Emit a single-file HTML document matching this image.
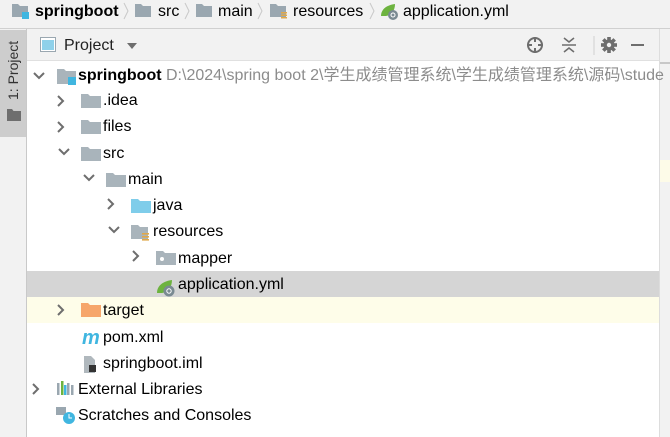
<!DOCTYPE html><html><head><meta charset="utf-8"><style>
*{margin:0;padding:0;box-sizing:border-box}
body{width:670px;height:437px;overflow:hidden;background:#fff;font-family:"Liberation Sans","Noto Sans CJK SC",sans-serif;font-size:16px;color:#000;position:relative}
.a{position:absolute;white-space:nowrap}
.row{position:absolute;left:27px;width:632px;height:26px}
.t{position:absolute;line-height:26px;top:0}
</style></head><body>
<div class="a" style="left:0;top:0;width:670px;height:29px;background:#f2f2f2;border-bottom:1px solid #d0d0d0"></div>
<svg class="a" style="left:0;top:0" width="440" height="29">
<g fill="#9aa7b0"><path d="M12 4h6l2 2h8v11H12z"/><path d="M135 4h6l2 2h8v11h-16z"/><path d="M196 4h6l2 2h8v11h-16z"/><path d="M270 4h6l2 2h8v11h-16z"/></g>
<rect x="22" y="12" width="7" height="7" fill="#40b6e0"/>
<g fill="#e0a84a"><rect x="281" y="12" width="6" height="1.5"/><rect x="281" y="14.5" width="6" height="1.5"/><rect x="281" y="17" width="6" height="1.5"/></g>
<g fill="none" stroke="#c8c8c8"><path d="M124 3l4 8-4 8"/><path d="M185 3l4 8-4 8"/><path d="M258 3l4 8-4 8"/><path d="M370 3l4 8-4 8"/></g>
<path d="M381 16c0-7 6-11 14-12 0 6-3 11-9 12z" fill="#6db33f"/><circle cx="393" cy="15" r="5" fill="#7a8a92"/><circle cx="393" cy="15" r="2" fill="none" stroke="#fff"/>
</svg>
<div class="a" style="left:35px;top:1px;font-weight:bold;line-height:22px">springboot</div>
<div class="a" style="left:158px;top:1px;line-height:22px">src</div>
<div class="a" style="left:218px;top:1px;line-height:22px">main</div>
<div class="a" style="left:293px;top:1px;line-height:22px">resources</div>
<div class="a" style="left:403px;top:1px;line-height:22px">application.yml</div>
<div class="a" style="left:0;top:29px;width:27px;height:408px;background:#f2f2f2;border-right:1px solid #c9c9c9"></div>
<div class="a" style="left:0;top:30px;width:26px;height:107px;background:#cdcdcd"></div>
<div class="a" style="left:5px;top:100px;transform:rotate(-90deg);transform-origin:0 0;font-size:14px;line-height:16px;color:#333;width:70px">1: Project</div>
<svg class="a" style="left:7px;top:109px" width="14" height="12"><path d="M0 0h5l1.5 2H14v10H0z" fill="#6e6e6e"/></svg>
<div class="a" style="left:27px;top:29px;width:632px;height:32px;background:#f2f2f2;border-bottom:1px solid #e0e0e0"></div>
<svg class="a" style="left:40px;top:37px" width="16" height="15"><rect x="0.5" y="0.5" width="15" height="14" fill="#fff" stroke="#9aa7b0"/><rect x="2" y="3" width="12" height="10" fill="#8fd1ea"/></svg>
<div class="a" style="left:64px;top:35px;line-height:22px;color:#222">Project</div>
<svg class="a" style="left:126px;top:42px" width="12" height="8"><path d="M1 1h10l-5 6z" fill="#6e6e6e"/></svg>
<svg class="a" style="left:520px;top:33px" width="130" height="24" fill="none" stroke="#6e6e6e" stroke-width="2">
<circle cx="15" cy="12" r="7"/><path d="M15 4v5M15 15v5M7 12h5M18 12h5"/>
<path d="M42 12h14M44 5l5 4 5-4M44 19l5-4 5 4" stroke-width="1.6"/>
<path d="M74 3v19" stroke="#d0d0d0" stroke-width="1"/>
<g fill="#6e6e6e" stroke="none"><circle cx="89" cy="12" r="5.5"/><g transform="translate(89 12)"><rect x="-1.8" y="-8" width="3.6" height="16"/><rect x="-1.8" y="-8" width="3.6" height="16" transform="rotate(45)"/><rect x="-1.8" y="-8" width="3.6" height="16" transform="rotate(90)"/><rect x="-1.8" y="-8" width="3.6" height="16" transform="rotate(135)"/></g></g><circle cx="89" cy="12" r="2.2" fill="#f2f2f2" stroke="none"/>
<path d="M111 12h13"/>
</svg>
<div class="a" style="left:659px;top:29px;width:11px;height:408px;background:#f2f2f2;border-left:1px solid #ddd"></div>
<div class="a" style="left:660px;top:62px;width:10px;height:2px;background:#c8c8c8"></div>
<div class="a" style="left:660px;top:160px;width:10px;height:22px;background:#fdfbe8"></div>
<div class="row" style="top:271px;background:#d5d5d5"></div>
<div class="row" style="top:297px;background:#fefde9"></div>
<svg class="a" style="left:27px;top:61px" width="632" height="376">
<g fill="none" stroke="#6e6e6e" stroke-width="2">
<path d="M7 12l5 5 5-5"/>
<path d="M31 35l5 5-5 5"/><path d="M31 61l5 5-5 5"/><path d="M32 88l5 5 5-5"/>
<path d="M57 114l5 5 5-5"/><path d="M81 138l5 5-5 5"/><path d="M82 166l5 5 5-5"/>
<path d="M106 190l5 5-5 5"/><path d="M31 244l5 5-5 5"/><path d="M6 323l5 5-5 5"/>
</g>
<g fill="#a9b4bb">
<path d="M30 8h7l2 2h10v13H30z"/>
<path d="M54 33h7l2 2h11v12H54z"/><path d="M54 59h7l2 2h11v12H54z"/><path d="M54 86h7l2 2h11v12H54z"/>
<path d="M79 112h7l2 2h11v12H79z"/>
<path d="M104 164h7l2 2h8v12h-17z"/>
<path d="M129 190h7l2 2h11v12h-20z"/>
</g>
<rect x="41" y="16" width="8" height="8" fill="#40b6e0"/>
<circle cx="135" cy="198" r="2" fill="#fff"/>
<path d="M104 138h7l2 2h11v12h-20z" fill="#7fcdea"/>
<g fill="#e0a84a"><rect x="115" y="172" width="7" height="1.6"/><rect x="115" y="175" width="7" height="1.6"/><rect x="115" y="178" width="7" height="1.6"/></g>
<path d="M54 242h7l2 2h11v12H54z" fill="#f6a66b"/>
<path d="M130 232c0-8 7-12 15-13 0 7-4 12-10 13z" fill="#6db33f"/><circle cx="142" cy="230" r="5.5" fill="#7a8a92"/><circle cx="142" cy="230" r="2.2" fill="none" stroke="#fff"/>
<text x="55" y="283" font-family="Liberation Sans" font-style="italic" font-weight="bold" font-size="20" fill="#40b6e0">m</text>
<path d="M57 295h7l4 4v13H57z" fill="#b0b8bd"/><rect x="62" y="304" width="7" height="7" fill="#333"/>
<g fill="#9aa7b0"><rect x="30" y="322" width="2.5" height="12"/><rect x="40" y="322" width="2.5" height="12"/><rect x="44" y="324" width="2.5" height="10"/></g>
<g fill="#6db33f"><rect x="34" y="320" width="2.5" height="14"/></g><rect x="37" y="324" width="2.5" height="10" fill="#40b6e0"/>
<rect x="29" y="346" width="10" height="8" fill="#9aa7b0"/><circle cx="42" cy="357" r="6" fill="#40b6e0"/><path d="M42 353v4h3" stroke="#fff" fill="none"/>
</svg>
<div class="a" style="left:78px;top:63px;line-height:26px"><b>springboot</b> <span style="color:#8c8c8c">D:\2024\spring boot 2\学生成绩管理系统\学生成绩管理系统\源码\stude</span></div>
<div class="a t" style="left:103px;top:88px">.idea</div>
<div class="a t" style="left:103px;top:114px">files</div>
<div class="a t" style="left:103px;top:141px">src</div>
<div class="a t" style="left:128px;top:167px">main</div>
<div class="a t" style="left:153px;top:193px">java</div>
<div class="a t" style="left:153px;top:219px">resources</div>
<div class="a t" style="left:178px;top:246px">mapper</div>
<div class="a t" style="left:178px;top:272px">application.yml</div>
<div class="a t" style="left:103px;top:298px">target</div>
<div class="a t" style="left:103px;top:325px">pom.xml</div>
<div class="a t" style="left:103px;top:351px">springboot.iml</div>
<div class="a t" style="left:78px;top:377px">External Libraries</div>
<div class="a t" style="left:78px;top:403px">Scratches and Consoles</div>
</body></html>
